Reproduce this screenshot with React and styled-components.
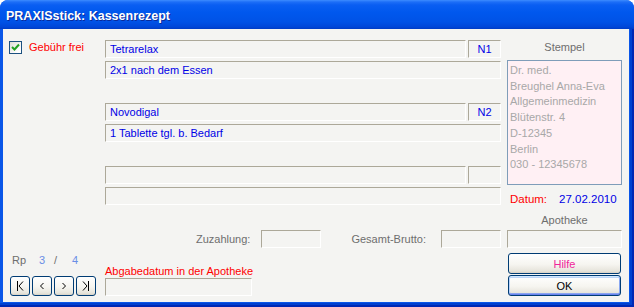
import styled, { createGlobalStyle } from 'styled-components';

const GlobalStyle = createGlobalStyle`
  html, body {
    margin: 0;
    padding: 0;
    background: #ffffff;
  }
  body {
    font-family: "Liberation Sans", Arial, sans-serif;
    font-size: 11px;
  }
`;

const Window = styled.div`
  width: 634px;
  height: 307px;
  display: flex;
  flex-direction: column;
  border-radius: 8px 8px 0 0;
  overflow: hidden;
  background: #0454e6;
`;

const TitleBar = styled.div`
  height: 29px;
  box-sizing: border-box;
  padding: 8px 0 0 6px;
  background: linear-gradient(
    to bottom,
    #3d8cff 0px,
    #1d6ef7 2px,
    #0a5ef2 5px,
    #0058ee 12px,
    #0052e6 22px,
    #0046d8 27px,
    #003cc4 29px
  );
`;

const Title = styled.div`
  font-family: "Liberation Sans", Arial, sans-serif;
  font-weight: bold;
  font-size: 12.5px;
  line-height: 16px;
  color: #ffffff;
  text-shadow: 1px 1px 0 #0a2a9a;
`;

const Frame = styled.div`
  flex: 1;
  display: flex;
  padding: 0 5px 5px 3px;
  background: #0a56e8;
  box-shadow: inset -2px -2px 0 #0028b4, inset -4px -4px 0 #0040d0;
`;

const Content = styled.div`
  flex: 1;
  display: flex;
  box-sizing: border-box;
  padding: 11px 7px 6px 0;
  background: #f4f4f2;
`;

const LeftColumn = styled.div`
  width: 102px;
  box-sizing: border-box;
  padding-left: 6px;
  display: flex;
  flex-direction: column;
  justify-content: space-between;
`;

const MiddleColumn = styled.div`
  width: 396px;
  display: flex;
  flex-direction: column;
`;

const RightColumn = styled.div`
  width: 115px;
  margin-left: 6px;
  display: flex;
  flex-direction: column;
`;

const CheckRow = styled.label`
  display: flex;
  align-items: center;
  gap: 7px;
  color: #ff0000;
  line-height: 14px;
`;

const CheckBox = styled.span`
  width: 13px;
  height: 13px;
  box-sizing: border-box;
  border: 1px solid #1c5180;
  background: linear-gradient(135deg, #dcdcd5 0%, #ffffff 80%);
  display: flex;
  align-items: center;
  justify-content: center;
`;

const Field = styled.div`
  box-sizing: border-box;
  width: ${(p) => p.$w || 'auto'};
  flex: ${(p) => (p.$grow ? 1 : 'none')};
  height: 18px;
  border-top: 1px solid #aca899;
  border-left: 1px solid #aca899;
  border-right: 1px solid #ffffff;
  border-bottom: 1px solid #ffffff;
  color: #0000e6;
  line-height: 16px;
  padding-left: 4px;
  text-align: ${(p) => (p.$center ? 'center' : 'left')};
  padding-right: ${(p) => (p.$center ? '4px' : '0')};
`;

const RxBlock = styled.div`
  display: flex;
  flex-direction: column;
  gap: 3px;
  margin-bottom: 24px;
`;

const RxRow = styled.div`
  display: flex;
  gap: 2px;
`;

const SumRow = styled.div`
  display: flex;
  justify-content: flex-end;
  align-items: center;
  margin-top: 1px;
`;

const Label = styled.span`
  color: #6e6e6e;
  line-height: 14px;
  margin-right: ${(p) => p.$gap || 0}px;
`;

const Spacer = styled.span`
  width: ${(p) => p.$w}px;
`;

const BottomGroup = styled.div`
  margin-top: auto;
  display: flex;
  flex-direction: column;
`;

const RedLabel = styled.div`
  color: #ff0000;
  line-height: 13px;
`;

const CenterLabel = styled.div`
  color: #6e6e6e;
  text-align: center;
  line-height: 14px;
  margin-bottom: ${(p) => p.$mb}px;
  margin-top: ${(p) => p.$mt || 0}px;
`;

const StampBox = styled.div`
  box-sizing: border-box;
  height: 125px;
  border: 1px solid #7f9db9;
  background: #fff0f4;
  color: #a8a8a8;
  padding: 2px 0 0 2px;
  line-height: 15.7px;
`;

const DateRow = styled.div`
  display: flex;
  margin-top: 7px;
  padding-left: 3px;
  font-size: 11.5px;
  line-height: 14px;
  color: #ff0000;
`;

const DateValue = styled.span`
  color: #0000e6;
  margin-left: 12px;
`;

const XpButton = styled.button`
  box-sizing: border-box;
  width: ${(p) => p.$w}px;
  height: ${(p) => p.$h}px;
  margin: ${(p) => p.$m || 0};
  padding: 0;
  border: 1px solid #003c74;
  border-radius: 3px;
  background: linear-gradient(to bottom, #ffffff 0%, #f6f5f0 55%, #e6e4db 90%, #d6d0c5 100%);
  font-family: "Liberation Sans", Arial, sans-serif;
  font-size: 11px;
  color: ${(p) => p.$color || '#000000'};
  display: flex;
  align-items: center;
  justify-content: center;
  box-shadow: ${(p) =>
    p.$default
      ? 'inset 0 1px 0 #cee7ff, inset 0 -1px 0 #6982ee, inset 1px 0 0 #b8d3fb, inset -1px 0 0 #8aa8f0, inset 0 2px 0 #bcd4f6, inset 0 -2px 0 #89a4ee'
      : 'none'};
`;

const RpRow = styled.div`
  display: flex;
  margin-left: 3px;
  line-height: 14px;
  color: #6e6e6e;
`;

const RpPart = styled.span`
  width: ${(p) => p.$w}px;
  color: ${(p) => (p.$blue ? '#6a8ee6' : '#6e6e6e')};
`;

const NavBar = styled.div`
  display: flex;
  gap: 2px;
  margin: 9px 0 0 1px;
`;

const Glyph = ({ kind }) => (
  <svg width="12" height="12" viewBox="0 0 12 12" fill="none" stroke="#000" strokeWidth="1">
    {kind === 'first' && (
      <>
        <line x1="3.5" y1="1" x2="3.5" y2="11" />
        <polyline points="9,1.5 5,6 9,10.5" />
      </>
    )}
    {kind === 'prev' && <polyline points="7.5,3 4.5,6 7.5,9" />}
    {kind === 'next' && <polyline points="4.5,3 7.5,6 4.5,9" />}
    {kind === 'last' && (
      <>
        <polyline points="3,1.5 7,6 3,10.5" />
        <line x1="8.5" y1="1" x2="8.5" y2="11" />
      </>
    )}
  </svg>
);

const prescriptions = [
  { name: 'Tetrarelax', size: 'N1', dose: '2x1 nach dem Essen' },
  { name: 'Novodigal', size: 'N2', dose: '1 Tablette tgl. b. Bedarf' },
  { name: '', size: '', dose: '' },
];

const stampLines = [
  'Dr. med.',
  'Breughel Anna-Eva',
  'Allgemeinmedizin',
  'Blütenstr. 4',
  'D-12345',
  'Berlin',
  '030 - 12345678',
];

export default function App() {
  return (
    <>
      <GlobalStyle />
      <Window>
        <TitleBar>
          <Title>PRAXISstick: Kassenrezept</Title>
        </TitleBar>
        <Frame>
          <Content>
            <LeftColumn>
              <CheckRow>
                <CheckBox>
                  <svg width="9" height="9" viewBox="0 0 9 9">
                    <polyline points="1,4 3.5,6.5 8,1.5" fill="none" stroke="#21a121" strokeWidth="2" />
                  </svg>
                </CheckBox>
                Gebühr frei
              </CheckRow>
              <div>
                <RpRow>
                  <RpPart $w={27}>Rp</RpPart>
                  <RpPart $w={15} $blue>3</RpPart>
                  <RpPart $w={18}>/</RpPart>
                  <RpPart $w={10} $blue>4</RpPart>
                </RpRow>
                <NavBar>
                  {['first', 'prev', 'next', 'last'].map((k) => (
                    <XpButton key={k} $w={20} $h={20}>
                      <Glyph kind={k} />
                    </XpButton>
                  ))}
                </NavBar>
              </div>
            </LeftColumn>

            <MiddleColumn>
              {prescriptions.map((rx, i) => (
                <RxBlock key={i}>
                  <RxRow>
                    <Field $grow>{rx.name}</Field>
                    <Field $w="33px" $center>{rx.size}</Field>
                  </RxRow>
                  <Field>{rx.dose}</Field>
                </RxBlock>
              ))}
              <SumRow>
                <Label $gap={11}>Zuzahlung:</Label>
                <Field $w="60px" />
                <Spacer $w={30} />
                <Label $gap={15}>Gesamt-Brutto:</Label>
                <Field $w="60px" />
              </SumRow>
              <BottomGroup>
                <RedLabel>Abgabedatum in der Apotheke</RedLabel>
                <Field $w="147px" />
              </BottomGroup>
            </MiddleColumn>

            <RightColumn>
              <CenterLabel $mb={6}>Stempel</CenterLabel>
              <StampBox>
                {stampLines.map((l) => (
                  <div key={l}>{l}</div>
                ))}
              </StampBox>
              <DateRow>
                Datum:
                <DateValue>27.02.2010</DateValue>
              </DateRow>
              <CenterLabel $mt={7} $mb={3}>Apotheke</CenterLabel>
              <Field />
              <XpButton $w={113} $h={21} $m="5px 0 0 1px" $color="#f0249a">
                Hilfe
              </XpButton>
              <XpButton $w={113} $h={21} $m="1px 0 0 1px" $default>
                OK
              </XpButton>
            </RightColumn>
          </Content>
        </Frame>
      </Window>
    </>
  );
}
